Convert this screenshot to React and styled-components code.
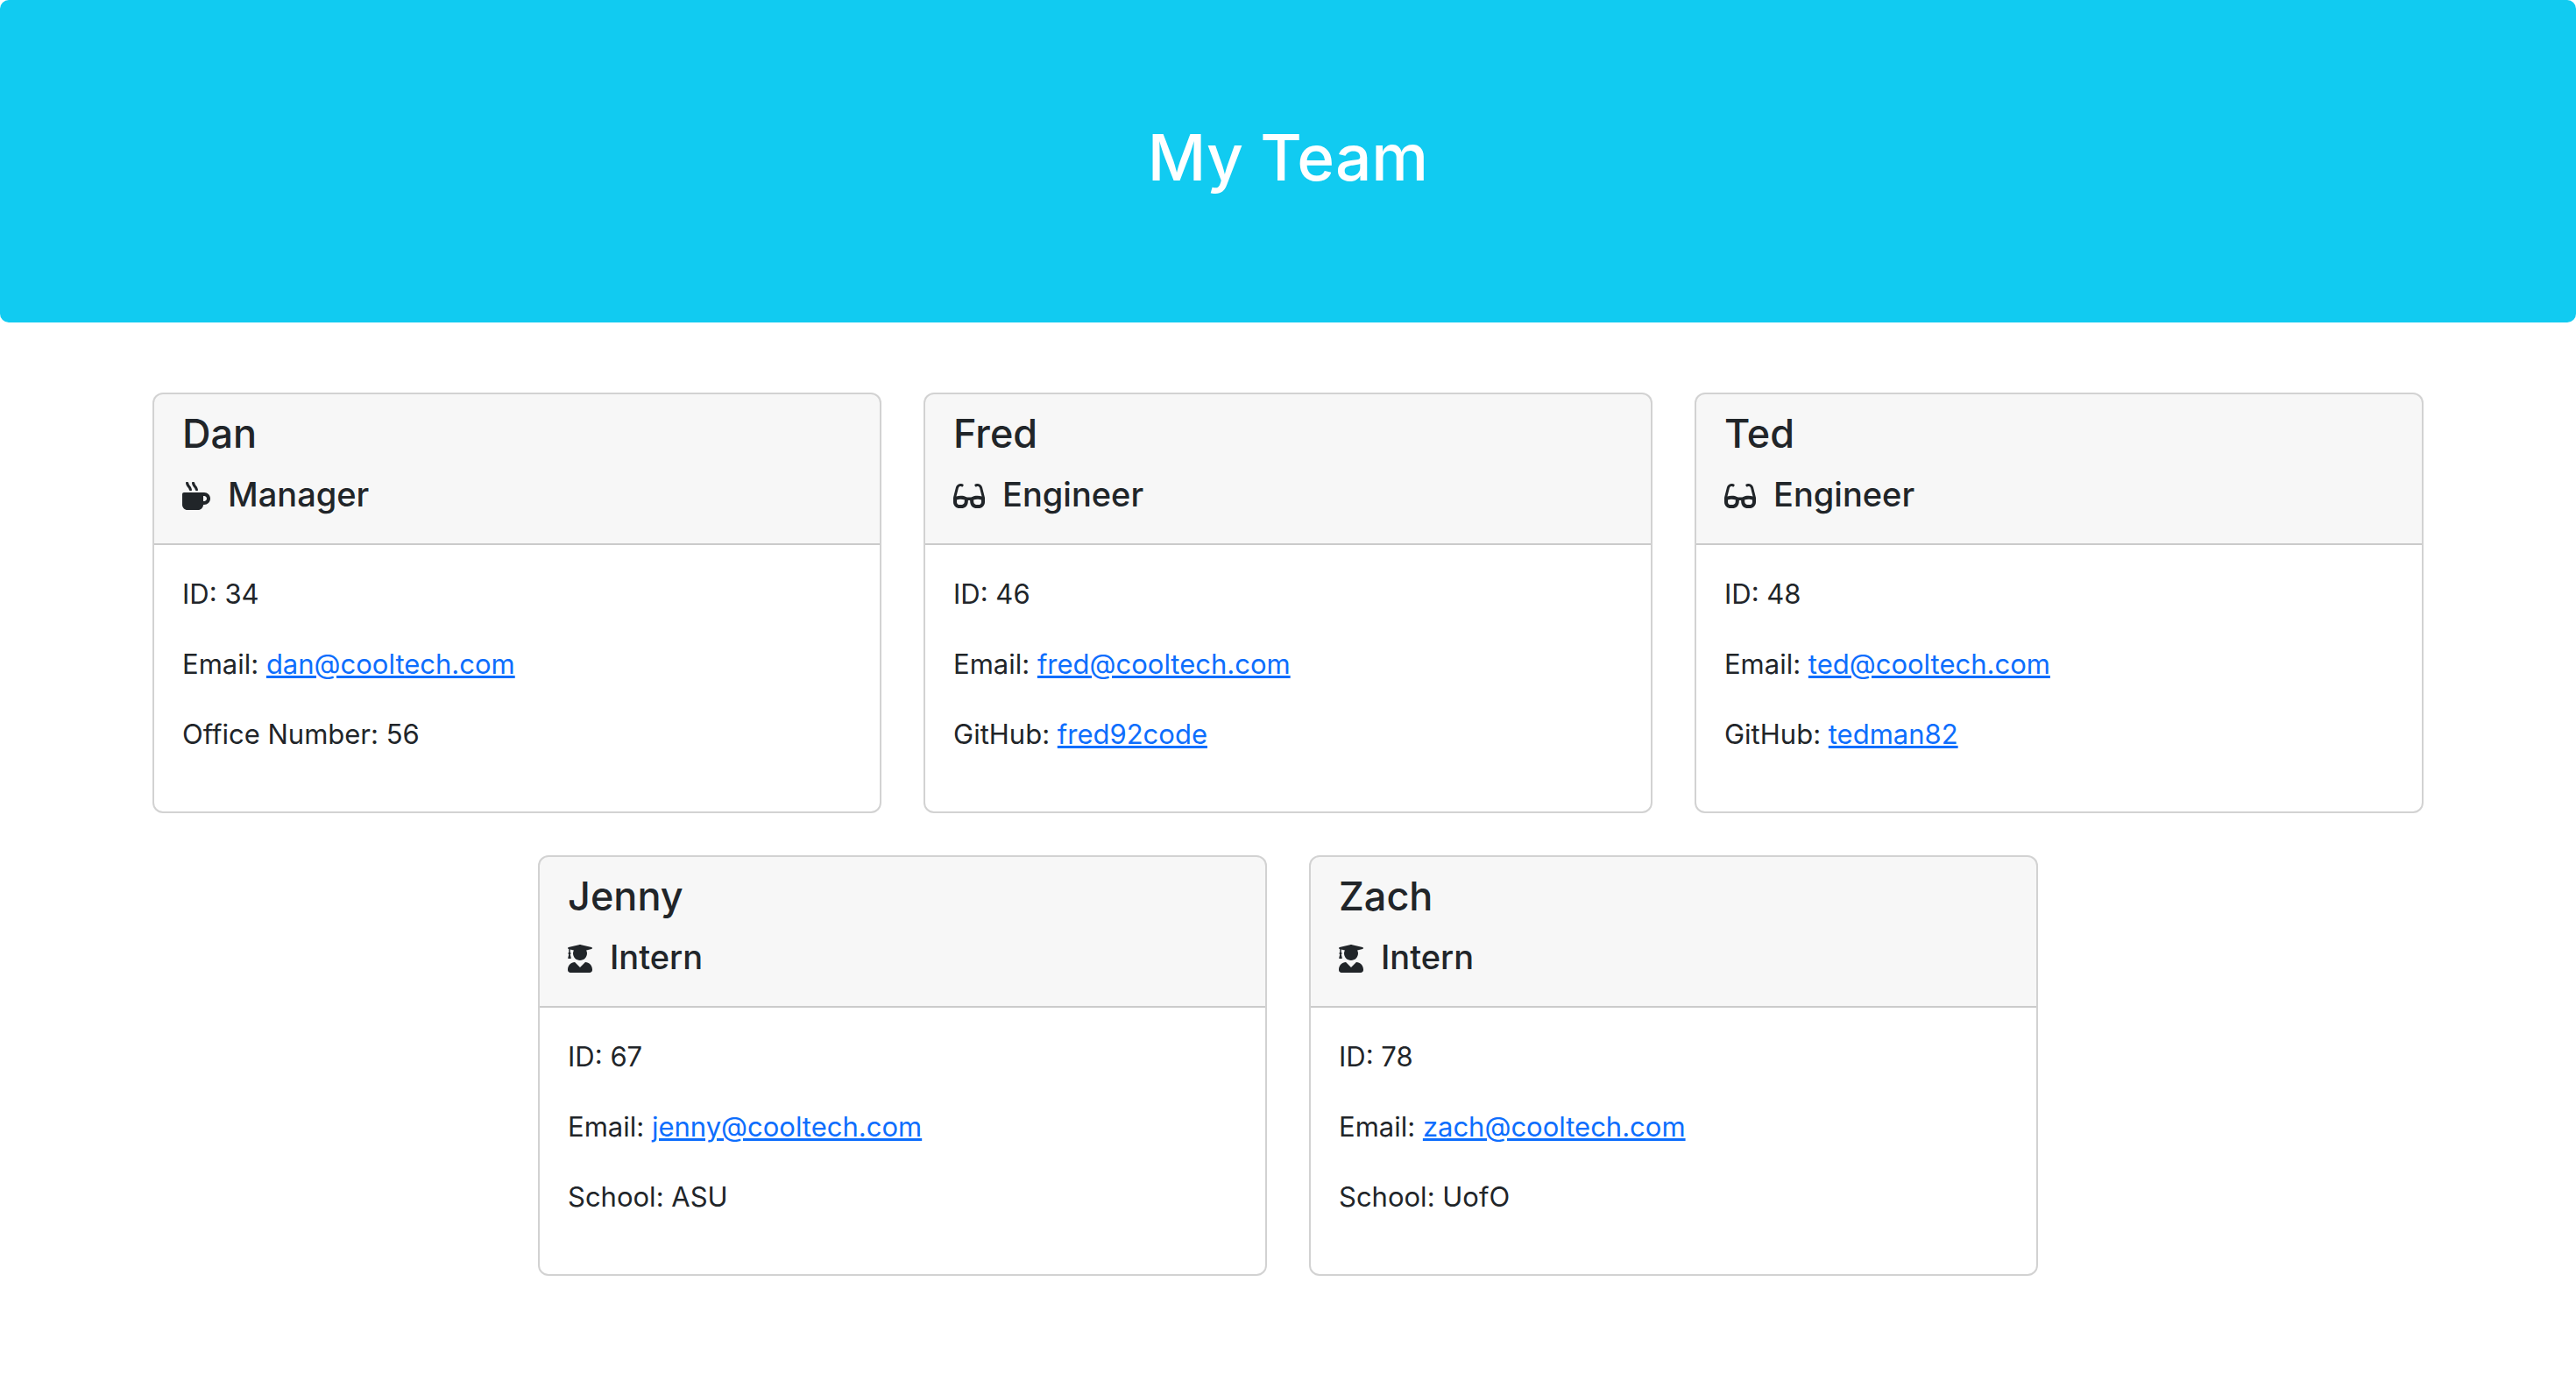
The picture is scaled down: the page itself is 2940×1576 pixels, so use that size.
import React from "react";
import styled, { createGlobalStyle } from "styled-components";
import { FaGlasses, FaMugHot, FaUserGraduate } from "react-icons/fa";

const GlobalStyle = createGlobalStyle`
  *, *::before, *::after { box-sizing: border-box; }
  body {
    margin: 0;
    background: #fff;
    color: #212529;
    font-family: Inter, "Liberation Sans", sans-serif;
    font-size: 31px;
    line-height: 48px;
  }
`;

const Hero = styled.header`
  padding: 132px 64px 140px;
  border-radius: 10px;
  background: #11cbf1;
  color: #fff;
  text-align: center;
`;

const HeroTitle = styled.h1`
  margin: 0;
  font-size: 73px;
  font-weight: 550;
  line-height: 96px;
`;

const Team = styled.main`
  display: flex;
  flex-wrap: wrap;
  justify-content: center;
  gap: 48px;
  max-width: 2640px;
  margin: 0 auto;
  padding: 80px 24px;
`;

const Card = styled.article`
  flex: 0 0 calc((100% - 96px) / 3);
  min-width: 0;
  border: 2px solid rgba(0, 0, 0, 0.175);
  border-radius: 12px;
  background: #fff;
  background-clip: padding-box;
  overflow: hidden;

  @media (max-width: 1400px) {
    flex-basis: 100%;
  }
`;

const CardHeader = styled.div`
  display: grid;
  gap: 16px;
  padding: 16px 32px 32px;
  border-bottom: 2px solid rgba(0, 0, 0, 0.175);
  background: rgba(0, 0, 0, 0.03);
`;

const Name = styled.h2`
  margin: 0;
  font-size: 45px;
  font-weight: 550;
  line-height: 58px;
`;

const Role = styled.h3`
  margin: 0;
  font-size: 38px;
  font-weight: 550;
  line-height: 48px;

  svg {
    width: ${({ $iconWidth }) => $iconWidth}px;
    height: 32px;
    margin-right: 20px;
    vertical-align: -4px;
  }
`;

const CardBody = styled.div`
  padding: 32px;
`;

const Detail = styled.p`
  margin: 0 0 32px;
`;

const Link = styled.a`
  color: #0d6efd;
  text-decoration: underline;
  text-decoration-thickness: 3px;
`;

const roleIcons = {
  Manager: { Icon: FaMugHot, width: 32 },
  Engineer: { Icon: FaGlasses, width: 36 },
  Intern: { Icon: FaUserGraduate, width: 28 },
};

const members = [
  { name: "Dan", role: "Manager", id: 34, email: "dan@cooltech.com", label: "Office Number", value: "56" },
  { name: "Fred", role: "Engineer", id: 46, email: "fred@cooltech.com", label: "GitHub", value: "fred92code" },
  { name: "Ted", role: "Engineer", id: 48, email: "ted@cooltech.com", label: "GitHub", value: "tedman82" },
  { name: "Jenny", role: "Intern", id: 67, email: "jenny@cooltech.com", label: "School", value: "ASU" },
  { name: "Zach", role: "Intern", id: 78, email: "zach@cooltech.com", label: "School", value: "UofO" },
];

function MemberCard({ member }) {
  const { Icon, width } = roleIcons[member.role];
  return (
    <Card>
      <CardHeader>
        <Name>{member.name}</Name>
        <Role $iconWidth={width}>
          <Icon aria-hidden="true" />
          {member.role}
        </Role>
      </CardHeader>
      <CardBody>
        <Detail>ID: {member.id}</Detail>
        <Detail>
          Email: <Link href={`mailto:${member.email}`}>{member.email}</Link>
        </Detail>
        <Detail>
          {member.label}:{" "}
          {member.label === "GitHub" ? (
            <Link href={`https://github.com/${member.value}`}>{member.value}</Link>
          ) : (
            member.value
          )}
        </Detail>
      </CardBody>
    </Card>
  );
}

export default function App() {
  return (
    <>
      <GlobalStyle />
      <Hero>
        <HeroTitle>My Team</HeroTitle>
      </Hero>
      <Team>
        {members.map((member) => (
          <MemberCard key={member.name} member={member} />
        ))}
      </Team>
    </>
  );
}
